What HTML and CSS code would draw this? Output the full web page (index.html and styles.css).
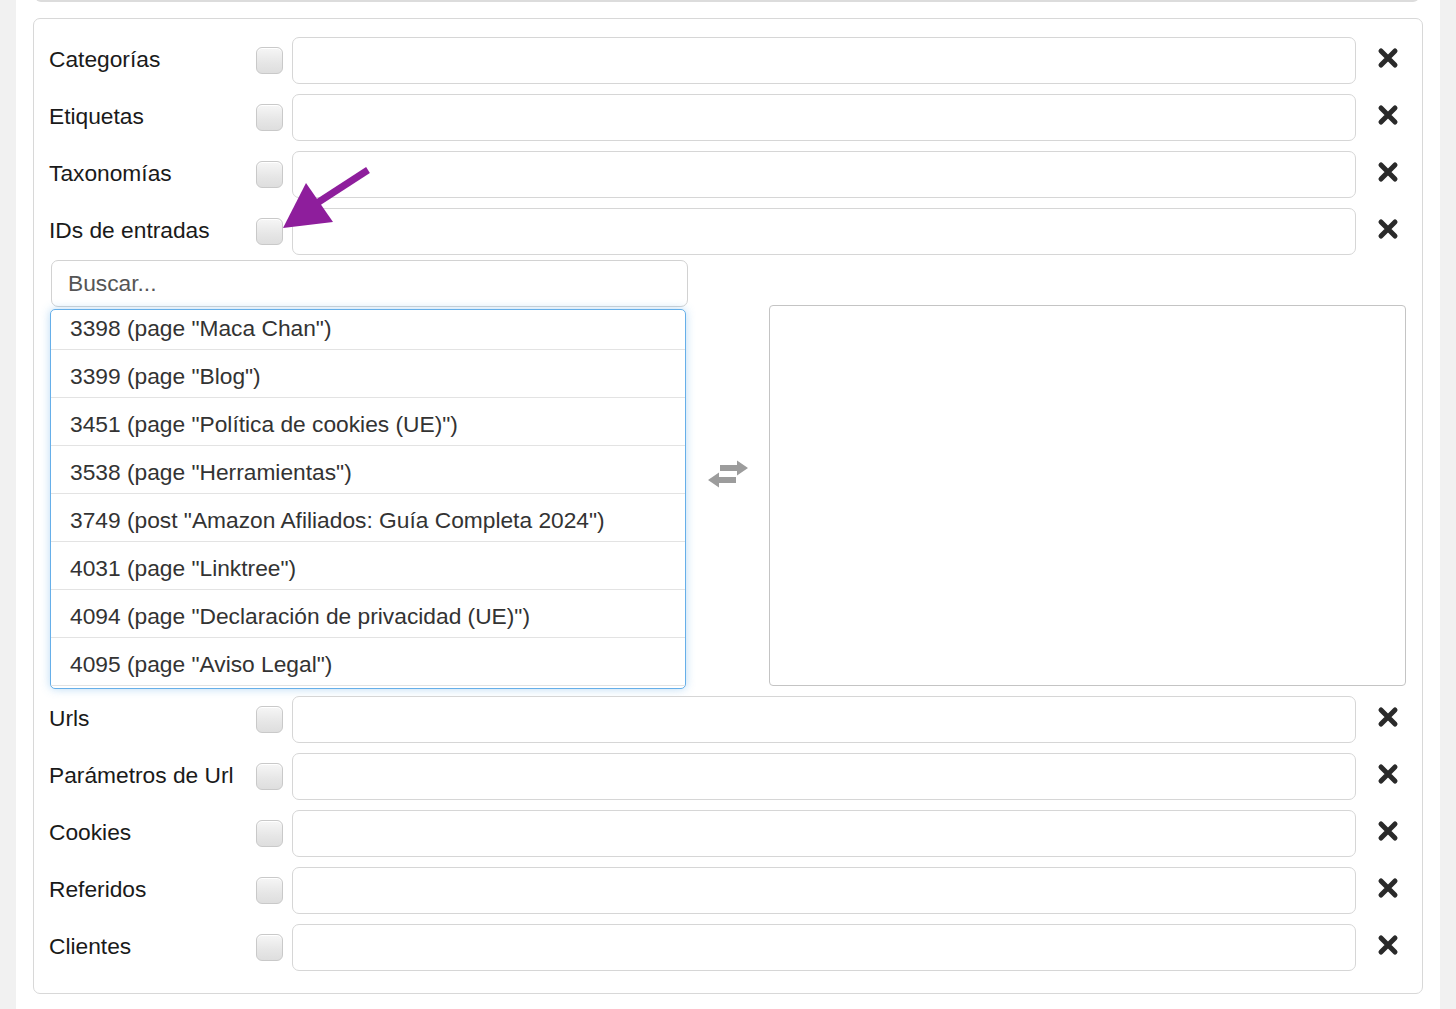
FILE: index.html
```html
<!DOCTYPE html>
<html lang="es">
<head>
<meta charset="utf-8">
<title>Reglas</title>
<link rel="stylesheet" href="styles.css">
</head>
<body>
<div class="page">
  <div class="prev-card"></div>
  <div class="card">
    <div class="row">
      <label class="lbl">Categorías</label>
      <span class="chk"></span>
      <input class="field" type="text">
      <span class="del"><svg viewBox="0 0 22 22" width="22" height="22"><path d="M4 4L18 18M18 4L4 18" stroke="#2a2a2a" stroke-width="5" stroke-linecap="round"/></svg></span>
    </div>
    <div class="row">
      <label class="lbl">Etiquetas</label>
      <span class="chk"></span>
      <input class="field" type="text">
      <span class="del"><svg viewBox="0 0 22 22" width="22" height="22"><path d="M4 4L18 18M18 4L4 18" stroke="#2a2a2a" stroke-width="5" stroke-linecap="round"/></svg></span>
    </div>
    <div class="row">
      <label class="lbl">Taxonomías</label>
      <span class="chk"></span>
      <input class="field" type="text">
      <span class="del"><svg viewBox="0 0 22 22" width="22" height="22"><path d="M4 4L18 18M18 4L4 18" stroke="#2a2a2a" stroke-width="5" stroke-linecap="round"/></svg></span>
    </div>
    <div class="row">
      <label class="lbl">IDs de entradas</label>
      <span class="chk"></span>
      <input class="field" type="text">
      <span class="del"><svg viewBox="0 0 22 22" width="22" height="22"><path d="M4 4L18 18M18 4L4 18" stroke="#2a2a2a" stroke-width="5" stroke-linecap="round"/></svg></span>
    </div>

    <div class="picker">
      <div class="picker-left">
        <input class="search" type="text" placeholder="Buscar...">
        <div class="options">
          <ul class="opt-list">
            <li>3398 (page "Maca Chan")</li>
            <li>3399 (page "Blog")</li>
            <li>3451 (page "Política de cookies (UE)")</li>
            <li>3538 (page "Herramientas")</li>
            <li>3749 (post "Amazon Afiliados: Guía Completa 2024")</li>
            <li>4031 (page "Linktree")</li>
            <li>4094 (page "Declaración de privacidad (UE)")</li>
            <li>4095 (page "Aviso Legal")</li>
          </ul>
        </div>
      </div>
      <div class="picker-mid">
        <svg class="swap" viewBox="0 0 42 28" width="42" height="28">
          <path d="M13 5H30V0.5L41 8L30 15.5V11H13Z" fill="#9c9c9c"/>
          <path d="M29 17H12V12.5L1 20L12 27.5V23H29Z" fill="#9c9c9c"/>
        </svg>
      </div>
      <div class="picker-right"></div>
    </div>

    <div class="row">
      <label class="lbl">Urls</label>
      <span class="chk"></span>
      <input class="field" type="text">
      <span class="del"><svg viewBox="0 0 22 22" width="22" height="22"><path d="M4 4L18 18M18 4L4 18" stroke="#2a2a2a" stroke-width="5" stroke-linecap="round"/></svg></span>
    </div>
    <div class="row">
      <label class="lbl">Parámetros de Url</label>
      <span class="chk"></span>
      <input class="field" type="text">
      <span class="del"><svg viewBox="0 0 22 22" width="22" height="22"><path d="M4 4L18 18M18 4L4 18" stroke="#2a2a2a" stroke-width="5" stroke-linecap="round"/></svg></span>
    </div>
    <div class="row">
      <label class="lbl">Cookies</label>
      <span class="chk"></span>
      <input class="field" type="text">
      <span class="del"><svg viewBox="0 0 22 22" width="22" height="22"><path d="M4 4L18 18M18 4L4 18" stroke="#2a2a2a" stroke-width="5" stroke-linecap="round"/></svg></span>
    </div>
    <div class="row">
      <label class="lbl">Referidos</label>
      <span class="chk"></span>
      <input class="field" type="text">
      <span class="del"><svg viewBox="0 0 22 22" width="22" height="22"><path d="M4 4L18 18M18 4L4 18" stroke="#2a2a2a" stroke-width="5" stroke-linecap="round"/></svg></span>
    </div>
    <div class="row">
      <label class="lbl">Clientes</label>
      <span class="chk"></span>
      <input class="field" type="text">
      <span class="del"><svg viewBox="0 0 22 22" width="22" height="22"><path d="M4 4L18 18M18 4L4 18" stroke="#2a2a2a" stroke-width="5" stroke-linecap="round"/></svg></span>
    </div>
  </div>
</div>

<svg class="annot" viewBox="0 0 1456 1009" width="1456" height="1009">
  <line x1="368" y1="170" x2="314" y2="205" stroke="#8e1e9c" stroke-width="7"/>
  <polygon points="283,228 306,183 333,222" fill="#8e1e9c"/>
</svg>
</body>
</html>
```

FILE: styles.css
```css
html, body {
  margin: 0;
  padding: 0;
}

body {
  background: #f1f1f1;
  font-family: "Liberation Sans", Arial, Helvetica, sans-serif;
  position: relative;
  width: 1456px;
  height: 1009px;
  overflow: hidden;
}

.page {
  display: flow-root;
  margin-left: 16px;
  width: 1424px;
  height: 1009px;
  background: #ffffff;
  padding-left: 17px;
  box-sizing: border-box;
}

.prev-card {
  width: 1384px;
  margin-left: 2px;
  height: 6px;
  margin-top: -4px;
  border: 2px solid #dcdcdc;
  border-top: none;
  border-radius: 0 0 7px 7px;
  box-sizing: border-box;
}

.card {
  margin-top: 16px;
  width: 1390px;
  border: 1.5px solid #d8d8d8;
  border-radius: 7px;
  box-sizing: border-box;
  padding: 17.5px 2px 22px 15px;
  display: flex;
  flex-direction: column;
  gap: 10px;
}

.row {
  display: flex;
  align-items: center;
  height: 47px;
}

.lbl {
  width: 207px;
  flex: none;
  font-size: 22.75px;
  color: #1a1a1a;
  white-space: nowrap;
  margin-bottom: 2px;
}

.chk {
  flex: none;
  width: 27px;
  height: 27px;
  box-sizing: border-box;
  border: 1px solid #c9c9c9;
  border-radius: 6px;
  background: linear-gradient(#f6f6f6, #e6e6e6 60%, #dedede);
  box-shadow: inset 0 1px 0 #ffffff;
  margin-right: 9px;
}

.field {
  flex: none;
  width: 1064px;
  height: 47px;
  box-sizing: border-box;
  border: 1.5px solid #d6d6d6;
  border-radius: 7px;
  background: #fff;
  margin: 0;
  padding: 0 14px;
  font: inherit;
}

.del {
  flex: none;
  width: 64px;
  display: flex;
  justify-content: center;
  align-items: center;
  margin-bottom: 4px;
}

.del svg {
  display: block;
}

.picker {
  display: grid;
  grid-template-columns: 637px 81px 637px;
  margin-top: -5px;
  margin-bottom: -3px;
  margin-left: 2px;
  height: 429px;
}

.picker-left {
  display: flex;
  flex-direction: column;
}

.search {
  width: 637px;
  height: 47px;
  box-sizing: border-box;
  border: 1.5px solid #d2d2d2;
  border-radius: 7px;
  margin: 0;
  padding: 0 16px;
  font-family: "Liberation Sans", Arial, Helvetica, sans-serif;
  font-size: 22.75px;
  color: #555;
  background: #fff;
}

.search::placeholder {
  color: #555;
}

.options {
  margin-top: 2px;
  margin-left: -1px;
  width: 636px;
  height: 380px;
  box-sizing: border-box;
  border: 1.5px solid #66afe9;
  border-radius: 5px;
  box-shadow: 0 0 10px rgba(102, 175, 233, 0.45);
  overflow: hidden;
  background: #fff;
}

.opt-list {
  list-style: none;
  margin: -8px 0 0 0;
  padding: 0;
}

.opt-list li {
  height: 47px;
  line-height: 53px;
  border-bottom: 1px solid #e3e3e3;
  padding-left: 19px;
  font-size: 22.75px;
  color: #333;
  white-space: nowrap;
}

.picker-mid {
  display: flex;
  align-items: center;
  justify-content: center;
  padding-right: 2px;
}

.swap {
  display: block;
  filter: blur(0.5px);
}

.picker-right {
  margin-top: 45px;
  height: 381px;
  border: 1.5px solid #c4c4c4;
  border-radius: 4px;
  box-sizing: border-box;
  background: #fff;
}

.annot {
  position: absolute;
  left: 0;
  top: 0;
  pointer-events: none;
}
```
